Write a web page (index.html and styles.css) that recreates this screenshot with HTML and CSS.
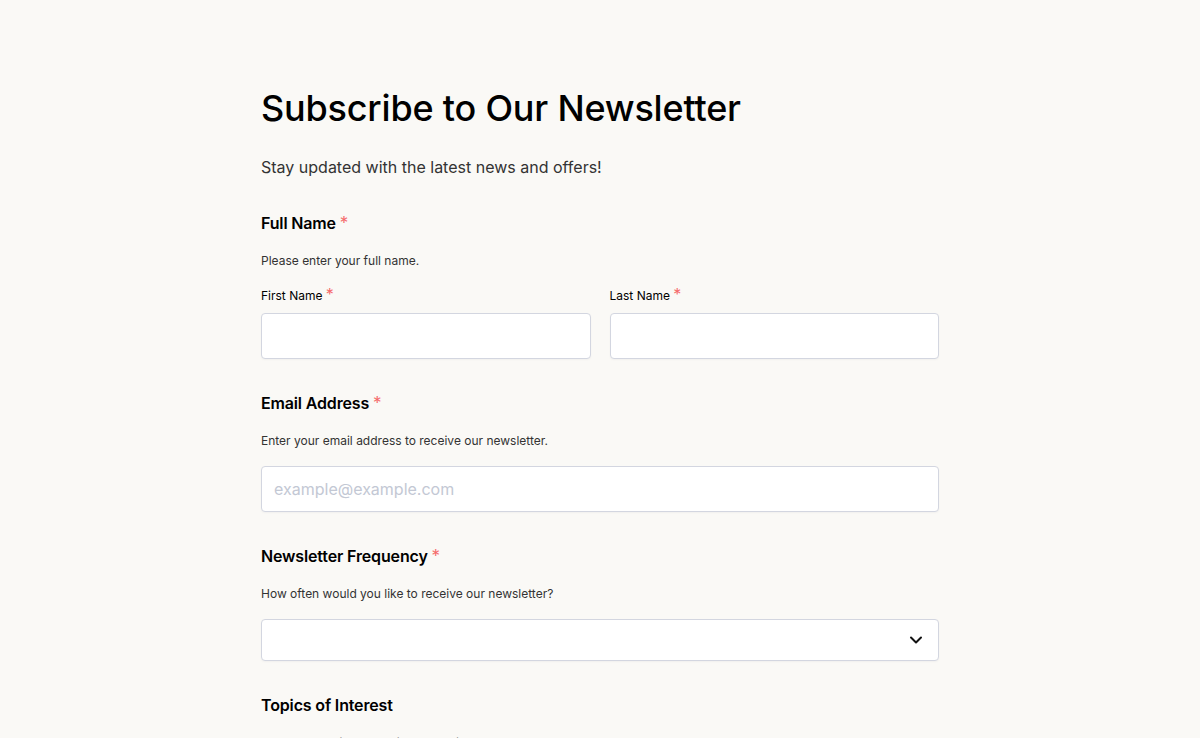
FILE: index.html
```html
<!DOCTYPE html>
<html lang="en">
<head>
<meta charset="utf-8">
<title>Subscribe to Our Newsletter</title>
<link rel="stylesheet" href="styles.css">
</head>
<body>
<main class="form-wrap">
  <h1 class="title">Subscribe to Our Newsletter</h1>
  <p class="subtitle">Stay updated with the latest news and offers!</p>

  <section class="field">
    <div class="label">Full Name <span class="req">*</span></div>
    <p class="desc">Please enter your full name.</p>
    <div class="row">
      <div class="col">
        <label class="sublabel">First Name <span class="req">*</span></label>
        <input class="input" type="text">
      </div>
      <div class="col">
        <label class="sublabel">Last Name <span class="req">*</span></label>
        <input class="input" type="text">
      </div>
    </div>
  </section>

  <section class="field">
    <div class="label">Email Address <span class="req">*</span></div>
    <p class="desc">Enter your email address to receive our newsletter.</p>
    <input class="input" type="email" placeholder="example@example.com">
  </section>

  <section class="field">
    <div class="label">Newsletter Frequency <span class="req">*</span></div>
    <p class="desc">How often would you like to receive our newsletter?</p>
    <div class="select">
      <svg class="chev" width="16" height="16" viewBox="0 0 16 16" aria-hidden="true"><path d="M3 5.5 L8 10.5 L13 5.5" fill="none" stroke="#111" stroke-width="2" stroke-linecap="round" stroke-linejoin="round"/></svg>
    </div>
  </section>

  <section class="field">
    <div class="label">Topics of Interest</div>
    <p class="desc">Select the topics you'd like to receive updates on.</p>
  </section>
</main>
</body>
</html>
```

FILE: styles.css
```css
html, body {
  margin: 0;
  padding: 0;
  background: #faf9f6;
}
body {
  font-family: Inter, "Noto Sans", sans-serif;
  color: #111;
}
.form-wrap {
  width: 678px;
  margin: 0 auto;
  padding-top: 86px;
}
.title {
  margin: 0;
  font-size: 36px;
  line-height: 44px;
  font-weight: 500;
  color: #000;
  letter-spacing: -0.2px;
}
.subtitle {
  margin: 25px 0 0;
  font-size: 16px;
  line-height: 24px;
  color: #333;
}
.field {
  margin-top: 32px;
}
.label {
  font-size: 16px;
  line-height: 24px;
  font-weight: 600;
  color: #000;
  letter-spacing: -0.15px;
}
.req {
  color: #f56b6b;
  font-weight: 400;
  font-size: 17px;
}
.desc {
  margin: 18px 0 0;
  font-size: 12px;
  line-height: 16px;
  color: #333;
}
.row {
  display: flex;
  gap: 19px;
  margin-top: 17px;
}
.col {
  flex: 1;
  display: flex;
  flex-direction: column;
}
.sublabel {
  font-size: 12px;
  line-height: 18px;
  color: #000;
  margin-bottom: 8px;
}
.sublabel .req {
  font-size: 16px;
  line-height: 16px;
}
.input {
  box-sizing: border-box;
  width: 100%;
  height: 46px;
  border: 1px solid #d3d6e0;
  border-radius: 4px;
  background: #fff;
  font-family: Inter, sans-serif;
  font-size: 16px;
  padding: 0 12px;
  margin: 0;
  display: block;
  box-shadow: 0 1px 2px rgba(16, 24, 40, 0.04);
}
.field > .input {
  margin-top: 17px;
}
.input::placeholder {
  color: #c3c8d4;
}
.select {
  box-sizing: border-box;
  margin-top: 17px;
  height: 42px;
  border: 1px solid #d3d6e0;
  border-radius: 4px;
  background: #fff;
  display: flex;
  align-items: center;
  justify-content: flex-end;
  padding-right: 14px;
  box-shadow: 0 1px 2px rgba(16, 24, 40, 0.04);
}
```
